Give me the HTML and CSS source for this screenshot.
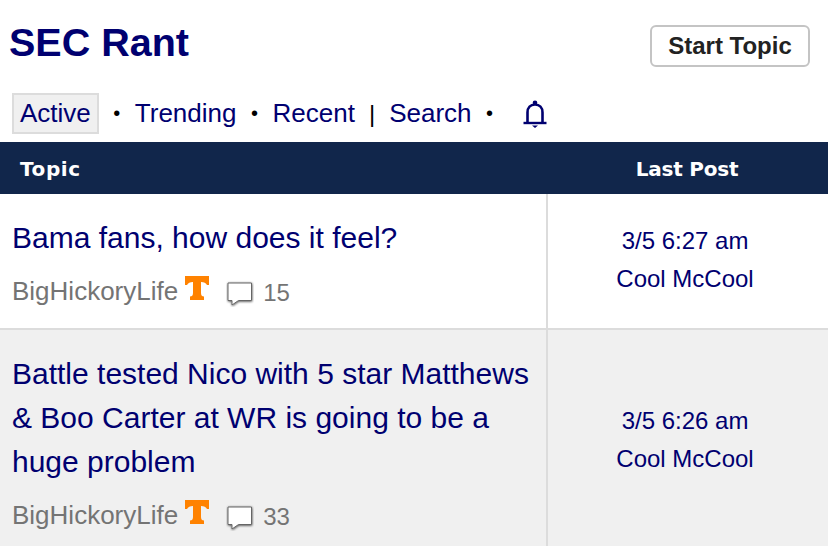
FILE: index.html
```html
<!DOCTYPE html>
<html lang="en">
<head>
<meta charset="utf-8">
<title>SEC Rant</title>
<link rel="stylesheet" href="styles.css">
</head>
<body>
<svg class="defs" width="0" height="0" aria-hidden="true"><defs><filter id="soft" x="-25%" y="-25%" width="150%" height="150%"><feDropShadow dx="0.300" dy="0.700" stdDeviation="1" flood-color="#000" flood-opacity=".7"/></filter></defs></svg>
<header class="top">
  <h1 class="title">SEC Rant</h1>
  <a class="start" href="#">Start Topic</a>
</header>
<nav class="tabs">
  <a class="tab active" href="#">Active</a>
  <span class="dot">•</span>
  <a class="tab" href="#">Trending</a>
  <span class="dot">•</span>
  <a class="tab" href="#">Recent</a>
  <span class="pipe">|</span>
  <a class="tab" href="#">Search</a>
  <span class="dot">•</span>
  <a class="bell" href="#" aria-label="Notifications">
    <svg width="24" height="28" viewBox="0 0 24 28"><path d="M0.500 23H23.500" fill="none" stroke="#000070" stroke-width="2.400"/><path d="M4.500 22V12.500C4.500 7.500 7.500 4.500 12 4.500S19.500 7.500 19.500 12.500V22" fill="none" stroke="#000070" stroke-width="2.600"/><circle cx="12" cy="2.800" r="2.300" fill="#000070"/><path d="M9 25.500H15L12 28Z" fill="#000070"/></svg>
  </a>
</nav>
<div class="thead">
  <div class="th-topic">Topic</div>
  <div class="th-last">Last Post</div>
</div>
<section class="row">
  <div class="topic">
    <a class="subject" href="#">Bama fans, how does it feel?</a>
    <div class="meta">
      <span class="author">BigHickoryLife</span>
      <svg class="logo" width="24" height="24" viewBox="0 0 24 24"><path d="M0 0H24V9H22C21 7 19 6 16 6V17C16 19.500 17 20.500 19 20.500V24H5V20.500C7 20.500 8 19.500 8 17V6C5 6 3 7 2 9H0Z" fill="#ff8200"/></svg>
      <svg class="bubble" width="28" height="27" viewBox="0 0 28 27"><path d="M2 3H25.500V20.500H12.500L6 25V20.500H2Z" fill="#fff" stroke="#666" stroke-width="1" filter="url(#soft)"/></svg>
      <span class="count">15</span>
    </div>
  </div>
  <div class="last">
    <div>3/5 6:27 am</div>
    <div>Cool McCool</div>
  </div>
</section>
<section class="row alt">
  <div class="topic">
    <a class="subject" href="#">Battle tested Nico with 5 star Matthews &amp; Boo Carter at WR is going to be a huge problem</a>
    <div class="meta">
      <span class="author">BigHickoryLife</span>
      <svg class="logo" width="24" height="24" viewBox="0 0 24 24"><path d="M0 0H24V9H22C21 7 19 6 16 6V17C16 19.500 17 20.500 19 20.500V24H5V20.500C7 20.500 8 19.500 8 17V6C5 6 3 7 2 9H0Z" fill="#ff8200"/></svg>
      <svg class="bubble" width="28" height="27" viewBox="0 0 28 27"><path d="M2 3H25.500V20.500H12.500L6 25V20.500H2Z" fill="#fff" stroke="#666" stroke-width="1" filter="url(#soft)"/></svg>
      <span class="count">33</span>
    </div>
  </div>
  <div class="last last-tall">
    <div>3/5 6:26 am</div>
    <div>Cool McCool</div>
  </div>
</section>
</body>
</html>
```
FILE: styles.css
```css
* { box-sizing: border-box; }
html, body { margin: 0; padding: 0; }
body {
  background: #fff;
  font-family: "Liberation Sans", Arial, sans-serif;
  color: #000070;
  overflow: hidden;
  height: 546px;
}
a { color: #000070; text-decoration: none; }
.defs { display: block; height: 0; }
.top {
  display: flex;
  justify-content: space-between;
  align-items: flex-start;
  height: 93px;
  padding: 19px 18px 0 9px;
}
.title {
  margin: 0;
  font-size: 39.500px;
  line-height: 46px;
  font-weight: bold;
}
.start {
  margin-top: 6px;
  width: 160px;
  height: 42px;
  border: 2px solid #c4c4c4;
  border-radius: 6px;
  color: #222;
  font-size: 24px;
  font-weight: bold;
  line-height: 37px;
  text-align: center;
}
.tabs {
  display: flex;
  align-items: center;
  height: 49px;
  padding: 0 0 8px 12px;
  font-size: 26px;
}
.tab.active {
  background: #f0f0f0;
  border: 2px solid #dcdcdc;
  padding: 0 6px;
  height: 41px;
  line-height: 37px;
}
.dot { color: #000; font-size: 20px; margin: 0 14.500px; }
.pipe { color: #000; font-size: 24px; margin: 0 14px; font-weight: 300; }
.bell { display: flex; margin-left: 15px; }
.thead {
  display: flex;
  height: 52px;
  background: #11264b;
  color: #fff;
  font-family: "DejaVu Sans", Verdana, sans-serif;
  font-weight: bold;
  font-size: 20px;
  line-height: 54px;
}
.th-topic { width: 546px; padding-left: 20px; letter-spacing: .6px; }
.th-last { flex: 1; text-align: center; letter-spacing: -.2px; }
.row {
  display: flex;
  border-bottom: 2px solid #dcdcdc;
  height: 136px;
}
.row.alt { background: #f0f0f0; height: 224px; border-bottom: 0; }
.topic {
  width: 548px;
  padding: 22px 12px 0 12px;
  border-right: 2px solid #dcdcdc;
}
.subject { display: block; font-size: 30px; line-height: 44px; }
.meta {
  display: flex;
  align-items: flex-start;
  margin-top: 16px;
  color: #747474;
  font-size: 26px;
  line-height: 30px;
}
.author { margin-right: 7px; }
.logo { margin-right: 17px; }
.bubble { margin-top: 4px; margin-right: 9px; }
.count { font-size: 24px; line-height: 34px; }
.last {
  flex: 1;
  display: flex;
  flex-direction: column;
  justify-content: center;
  align-items: center;
  gap: 6px;
  padding: 0 6px 2px 0;
  font-size: 24px;
  line-height: 32px;
}
.last-tall { padding-bottom: 4px; }
```
